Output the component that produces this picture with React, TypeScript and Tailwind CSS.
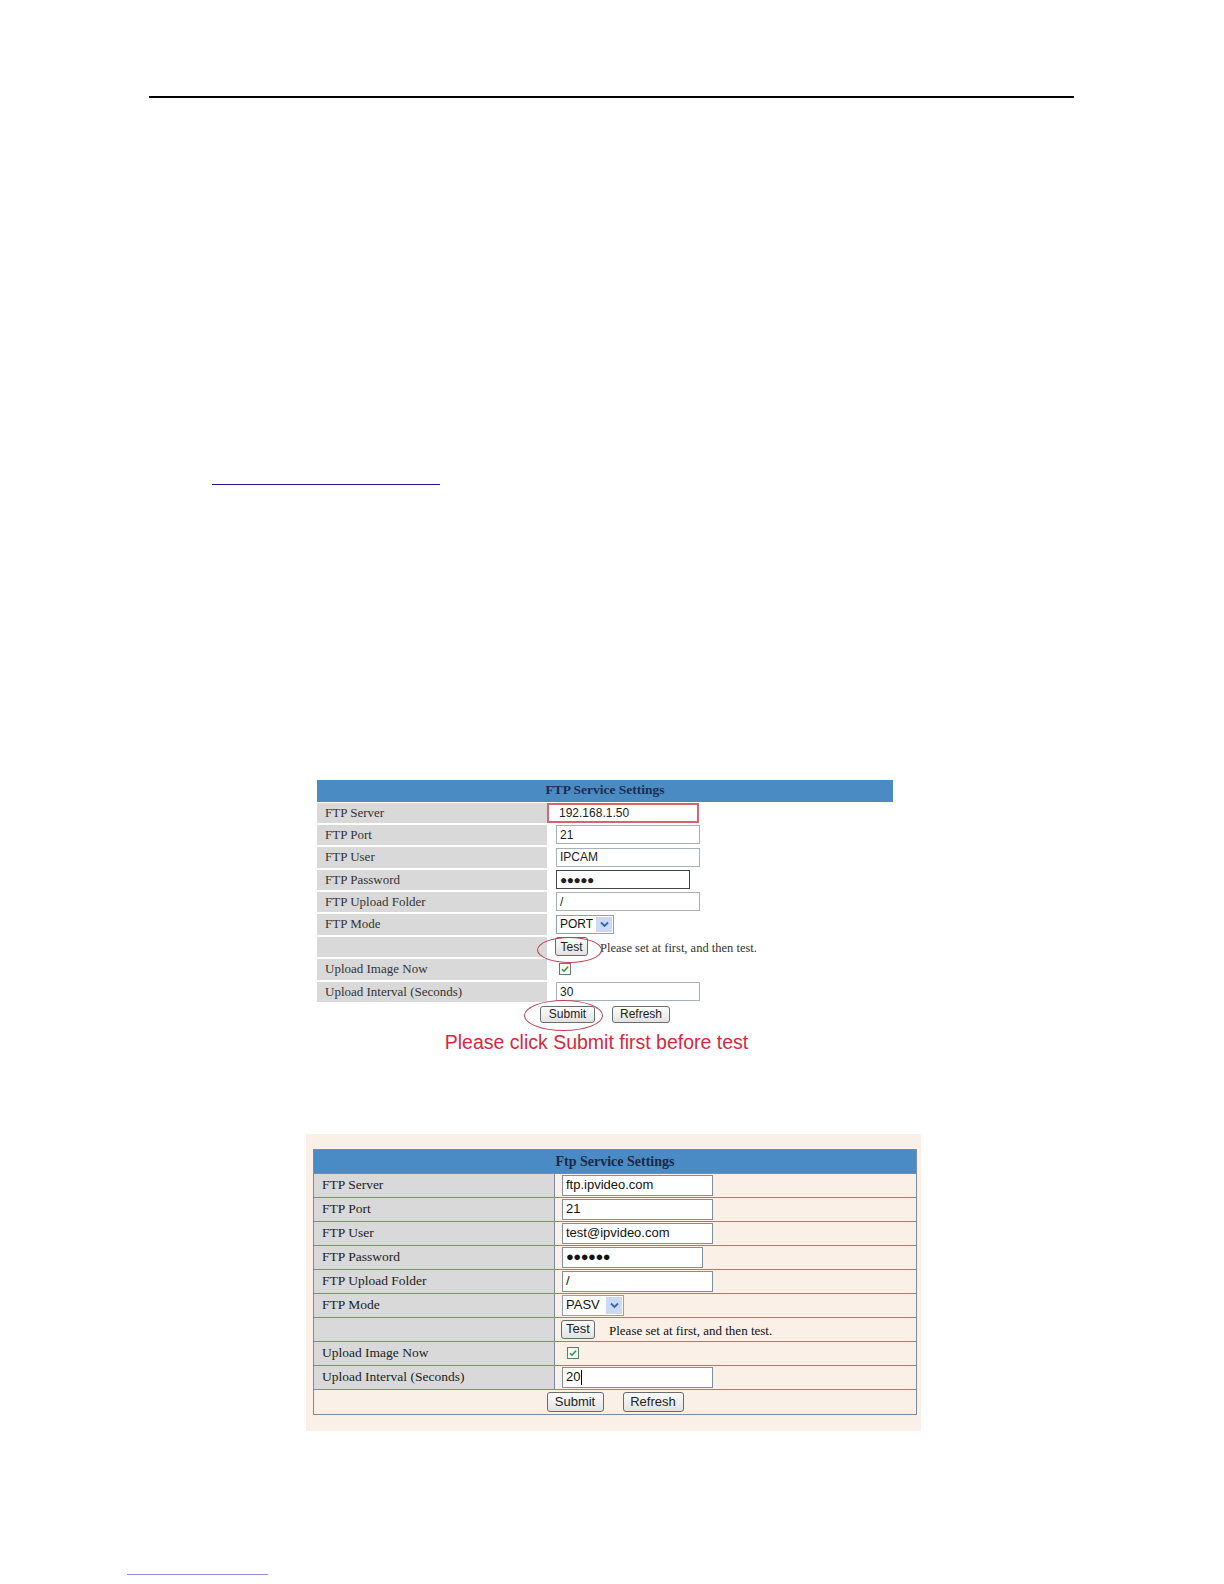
import React from "react";

const serif = { fontFamily: '"Liberation Serif", "Times New Roman", serif' };
const sans = { fontFamily: '"Liberation Sans", Arial, sans-serif' };

function Check({ size = 12 }: { size?: number }) {
  return (
    <svg width={size} height={size} viewBox="0 0 12 12">
      <rect x="0.5" y="0.5" width="11" height="11" fill="#f4f8f4" stroke="#5b7f6a" />
      <path d="M3 6.2 L5 8.2 L9 3.8" fill="none" stroke="#2f9a3a" strokeWidth="1.6" />
    </svg>
  );
}

function SelectBox({ value, w, h, fs }: { value: string; w: number; h: number; fs: string }) {
  return (
    <div className="flex items-center border border-[#8aa0bd] bg-white" style={{ width: w, height: h }}>
      <span className={`flex-1 pl-[3px] text-[#111] ${fs}`} style={sans}>{value}</span>
      <span className="mr-[1px] flex h-[calc(100%-2px)] w-[16px] items-center justify-center bg-[#c9daf6]">
        <svg width="9" height="7" viewBox="0 0 9 7">
          <path d="M1 1.5 L4.5 5 L8 1.5" fill="none" stroke="#3a62b0" strokeWidth="1.8" />
        </svg>
      </span>
    </div>
  );
}

function Btn({ label, w, h, fs }: { label: string; w: number; h: number; fs: string }) {
  return (
    <div
      className={`flex items-center justify-center rounded-[3px] border border-[#6b6b6b] bg-gradient-to-b from-[#fdfdfd] to-[#e2e2e2] text-[#222] ${fs}`}
      style={{ ...sans, width: w, height: h }}
    >
      {label}
    </div>
  );
}

function Inp1({ v, w = 144, dark }: { v: string; w?: number; dark?: boolean }) {
  return (
    <div
      className={`flex h-[19px] items-center border bg-white pl-[3px] text-[#222] ${dark ? "border-[#444] text-[12px] tracking-[-0.5px]" : "border-[#aab0b8] text-[12px]"}`}
      style={{ ...sans, width: w }}
    >
      {v}
    </div>
  );
}

function Shot1() {
  const rows: { label: string; value: React.ReactNode; tall?: boolean }[] = [
    {
      label: "FTP Server",
      value: (
        <div className="-ml-[9px] flex h-[20px] w-[152px] items-center border-2 border-[#d9636f] bg-white pl-[10px] text-[12px] text-[#222]" style={sans}>
          192.168.1.50
        </div>
      ),
    },
    { label: "FTP Port", value: <Inp1 v="21" /> },
    { label: "FTP User", value: <Inp1 v="IPCAM" />, tall: true },
    { label: "FTP Password", value: <Inp1 v="●●●●●" w={134} dark /> },
    { label: "FTP Upload Folder", value: <Inp1 v="/" /> },
    { label: "FTP Mode", value: <SelectBox value="PORT" w={58} h={19} fs="text-[12px]" />, tall: true },
    {
      label: "",
      value: (
        <div className="-ml-[1px] flex items-center">
          <Btn label="Test" w={33} h={19} fs="text-[12px]" />
          <span className="ml-[12px] mt-[3px] text-[12.5px] text-[#333]" style={serif}>
            Please set at first, and then test.
          </span>
        </div>
      ),
    },
    { label: "Upload Image Now", value: <div className="ml-[3px]"><Check /></div>, tall: true },
    { label: "Upload Interval (Seconds)", value: <Inp1 v="30" /> },
  ];
  return (
    <div className="relative ml-[317px] mt-[295px] w-[576px]">
      <div className="flex h-[22px] items-end justify-center bg-[#4a8bc4] pb-[1px] text-[13.5px] font-bold text-[#1c2d4f]" style={serif}>
        FTP Service Settings
      </div>
      {rows.map((r, i) => (
        <div key={i} className={`flex items-center ${r.tall ? "h-[23px]" : "h-[22px]"}`}>
          <div className={`flex w-[230px] items-center bg-[#d9d9d9] pl-[8px] text-[13px] text-[#333] ${r.tall ? "h-[21px]" : "h-[20px]"}`} style={serif}>
            {r.label}
          </div>
          <div className="ml-[9px] flex h-[20px] flex-1 items-center">{r.value}</div>
        </div>
      ))}
      <div className="mt-[3px] flex justify-center gap-[17px]">
        <Btn label="Submit" w={55} h={17} fs="text-[12px]" />
        <Btn label="Refresh" w={58} h={17} fs="text-[12px]" />
      </div>
      <div className="mt-[7px] pr-[17px] text-center text-[19.5px] leading-[24px] text-[#d42a3c]" style={sans}>
        Please click Submit first before test
      </div>
      {/* red ellipses */}
      <div className="absolute left-[220px] top-[157px] h-[26px] w-[65px] rounded-[50%] border border-[#b84455]" />
      <div className="absolute left-[207px] top-[220px] h-[31px] w-[79px] rounded-[50%] border border-[#b84455]" />
    </div>
  );
}

function Inp2({ v, w = 151, dots, cursor }: { v: string; w?: number; dots?: boolean; cursor?: boolean }) {
  return (
    <div
      className={`flex h-[21px] items-center border border-[#7f8fa8] bg-white pl-[3px] text-[#111] ${dots ? "text-[13px] tracking-[-0.5px]" : "text-[13px]"}`}
      style={{ ...sans, width: w }}
    >
      {v}
      {cursor && <span className="ml-[1px] inline-block h-[15px] w-px bg-black" />}
    </div>
  );
}

function Shot2() {
  const rows: { label: string; value: React.ReactNode }[] = [
    { label: "FTP Server", value: <Inp2 v="ftp.ipvideo.com" /> },
    { label: "FTP Port", value: <Inp2 v="21" /> },
    { label: "FTP User", value: <Inp2 v="test@ipvideo.com" /> },
    { label: "FTP Password", value: <Inp2 v="●●●●●●" w={141} dots /> },
    { label: "FTP Upload Folder", value: <Inp2 v="/" /> },
    { label: "FTP Mode", value: <SelectBox value="PASV" w={62} h={21} fs="text-[13px]" /> },
    {
      label: "",
      value: (
        <div className="-ml-[1px] flex items-center">
          <Btn label="Test" w={34} h={19} fs="text-[13px]" />
          <span className="ml-[14px] mt-[3px] text-[13px] text-[#111]" style={serif}>
            Please set at first, and then test.
          </span>
        </div>
      ),
    },
    { label: "Upload Image Now", value: <div className="ml-[5px]"><Check /></div> },
    { label: "Upload Interval (Seconds)", value: <Inp2 v="20" cursor /> },
  ];
  return (
    <div className="ml-[306px] mt-[80px] w-[615px] bg-[#fbf0e7] pb-[16px] pl-[7px] pr-[4px] pt-[15px]">
      <div className="border border-[#7d8aa3]">
        <div className="flex h-[24px] items-end justify-center border-b border-[#7d8aa3] bg-[#4b8bc5] pb-[1px] text-[14px] font-bold text-[#1a2945]" style={serif}>
          Ftp Service Settings
        </div>
        {rows.map((r, i) => (
          <div key={i} className="flex h-[24px] border-b border-[#7d8aa3]">
            <div className="flex w-[241px] items-center border-r border-[#7d8aa3] bg-[#d9d9d9] pl-[8px] text-[13.5px] text-[#222]" style={serif}>
              {r.label}
            </div>
            <div className="flex flex-1 items-center pl-[7px]">{r.value}</div>
          </div>
        ))}
        <div className="flex h-[24px] items-center justify-center gap-[19px]">
          <Btn label="Submit" w={57} h={20} fs="text-[13px]" />
          <Btn label="Refresh" w={61} h={20} fs="text-[13px]" />
        </div>
      </div>
    </div>
  );
}

export default function App() {
  return (
    <div className="relative flex h-[1584px] w-[1224px] flex-col overflow-hidden bg-white">
      <div className="ml-[149px] mt-[96px] h-[1.5px] w-[925px] bg-black" />
      <div className="ml-[212px] mt-[386px] h-px w-[228px] bg-[#1b1b8e]" />
      <Shot1 />
      <Shot2 />
      <div className="ml-[127px] mt-[143px] h-px w-[141px] bg-[#8a94d0]" />
    </div>
  );
}
